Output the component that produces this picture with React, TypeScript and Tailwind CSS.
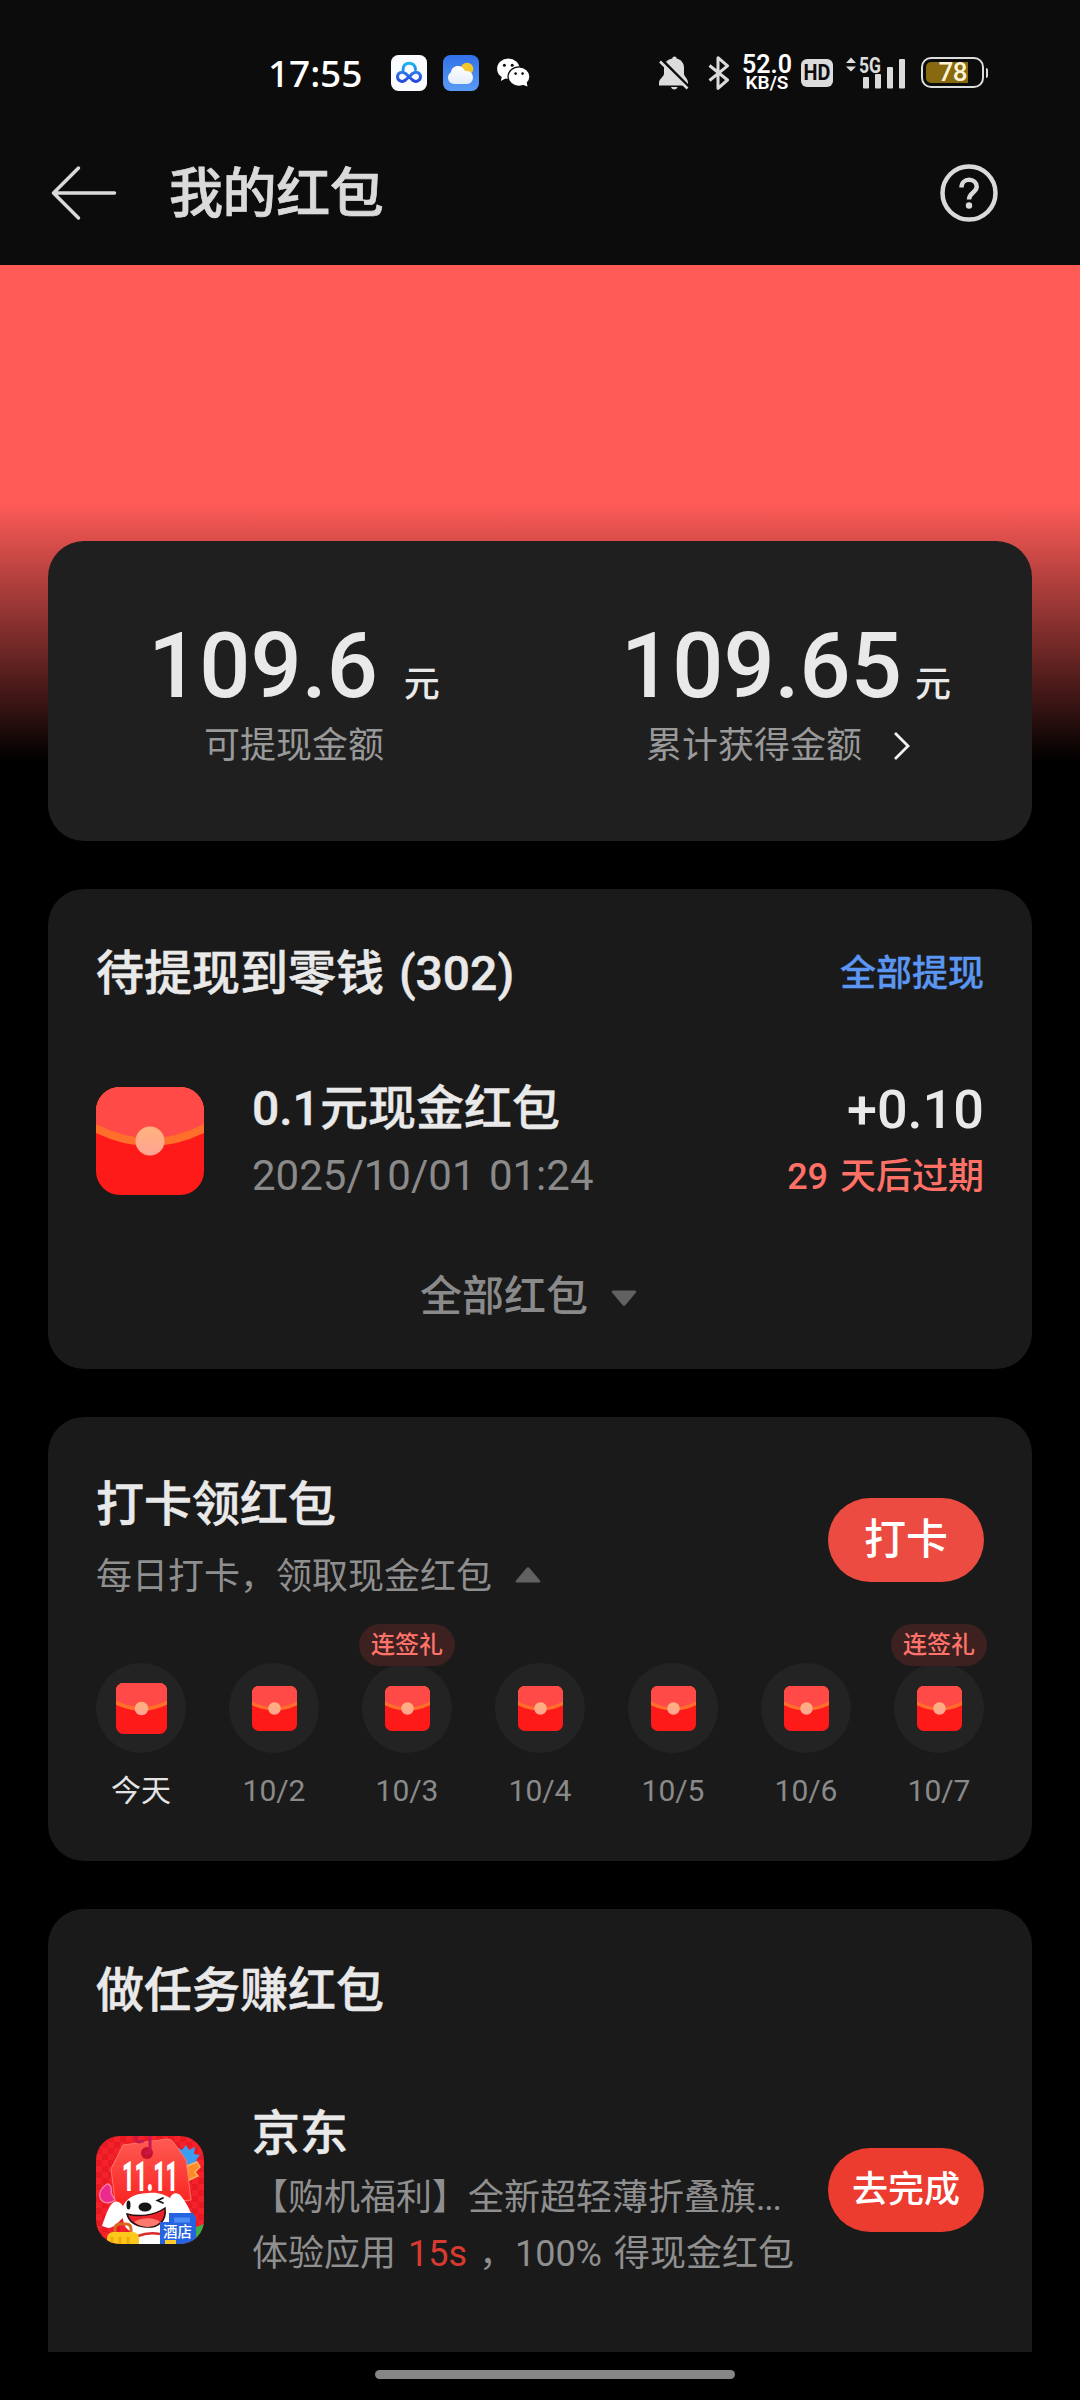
import * as React from 'react';

interface EnvelopeProps {
    className: string;
    radius: number;
    seal: number;
}

interface CheckInDay {
    label: string;
    today?: boolean;
    bonus?: boolean;
}

interface AppProps {};
interface AppState {
    signed: boolean;
};

const days: CheckInDay[] = [
    { label: '今天', today: true },
    { label: '10/2' },
    { label: '10/3', bonus: true },
    { label: '10/4' },
    { label: '10/5' },
    { label: '10/6' },
    { label: '10/7', bonus: true },
];

const Envelope = ({ className, radius, seal }: EnvelopeProps) => {
    const id = 'env' + radius;
    return <svg viewBox="0 0 108 108" className={className}>
        <defs>
            <clipPath id={id}>
                <rect width="108" height="108" rx={radius} />
            </clipPath>
            <linearGradient id={id + 's'} x1="0" y1="0" x2="0" y2="1">
                <stop offset="0" stopColor="#ffb27c" />
                <stop offset="1" stopColor="#ffa494" />
            </linearGradient>
        </defs>
        <g clipPath={'url(#' + id + ')'}>
            <rect width="108" height="108" fill="#ff1a1a" />
            <path d="M0 0H108V46Q54 72 0 46Z" fill="#ff6f2b" />
            <path d="M0 0H108V37Q54 65 0 37Z" fill="#ff4a48" />
        </g>
        <circle cx="54" cy="54" r={seal} fill={'url(#' + id + 's)'} />
    </svg>;
}

const StatusBar = () => (
    <div className="flex h-[120px] items-center pl-[268px] pt-[25px] text-[#dcdcdc]">
        <div className="w-[123px] font-['Noto_Sans'] text-[37px] font-medium leading-[36px] tracking-[-0.1px] text-white">17:55</div>

        <svg viewBox="0 0 36 36" className="h-9 w-9">
            <defs>
                <linearGradient id="pan" x1="0" y1="0" x2="0" y2="1">
                    <stop offset="0" stopColor="#1fb4ee" />
                    <stop offset="0.55" stopColor="#2b74ea" />
                    <stop offset="1" stopColor="#2449d8" />
                </linearGradient>
            </defs>
            <rect width="36" height="36" rx="7.5" fill="#fbfcff" />
            <path d="M12 15C11.500 6 24.500 6 24.500 14.500M18 21.800L14.500 25C11 28 6.500 25.600 6.500 21.800C6.500 17.800 11 15.800 14.400 18.500L21.500 25C25 28 29.500 25.600 29.500 21.800C29.500 17.800 25 15.800 21.600 18.500L19.800 20.200" fill="none" stroke="url(#pan)" strokeWidth="3" strokeLinecap="round" />
        </svg>

        <svg viewBox="0 0 36 36" className="ml-4 h-9 w-9">
            <defs>
                <linearGradient id="sky" x1="0" y1="0" x2="0" y2="1">
                    <stop offset="0" stopColor="#3271e8" />
                    <stop offset="1" stopColor="#5a9bf5" />
                </linearGradient>
                <linearGradient id="cloud" x1="0" y1="0" x2="0" y2="1">
                    <stop offset="0" stopColor="#ffffff" />
                    <stop offset="1" stopColor="#e4ecf8" />
                </linearGradient>
            </defs>
            <rect width="36" height="36" rx="7.500" fill="url(#sky)" />
            <circle cx="24" cy="14" r="6.300" fill="#f5c52e" />
            <path d="M11.500 29C7.800 29 5 26.200 5 22.800C5 20.200 6.200 18.400 8 17.200C8.300 13.500 11.300 11 15 11C18.200 11 20.600 12.800 21.800 15.800C26.500 15.400 30 18.300 30 22.500C30 26.300 27.300 29 23.500 29Z" fill="url(#cloud)" />
        </svg>

        <svg viewBox="0 0 33 29" className="ml-[18px] h-[29px] w-[33px]">
            <path d="M5 18L3.800 23L9 20.300Z" fill="#fff" />
            <ellipse cx="11.300" cy="10.800" rx="11.200" ry="10.200" fill="#fff" />
            <ellipse cx="22" cy="18.600" rx="11" ry="9.800" fill="#fff" stroke="#0c0c0c" strokeWidth="1.300" />
            <path d="M25 26.500L30.500 28.500L29.500 23.500Z" fill="#fff" />
            <circle cx="7.400" cy="7.200" r="1.500" fill="#0c0c0c" />
            <circle cx="15.200" cy="7.200" r="1.500" fill="#0c0c0c" />
            <circle cx="18.600" cy="15.600" r="1.300" fill="#0c0c0c" />
            <circle cx="25.600" cy="15.600" r="1.300" fill="#0c0c0c" />
        </svg>

        <svg viewBox="0 0 30 34" className="ml-[129px] h-[34px] w-[30px]" fill="currentColor">
            <path d="M15.500 0.500C16.800 0.500 17.600 1.400 17.600 2.500C22 3.500 25 7 25 11.500V18C25 20.500 29 22.500 29 27V29.500H0V27C0 22.500 5 21 5 17.500V11C5 6.800 8.500 3.400 13.300 2.500C13.400 1.300 14.200 0.500 15.500 0.500ZM12 31H18.500C18 32.600 17 33.500 15.300 33.500C13.600 33.500 12.500 32.600 12 31Z" />
            <path d="M2.500 3.500L30 31" stroke="#0c0c0c" strokeWidth="3" />
            <path d="M1 5.500L28.500 32.500" stroke="currentColor" strokeWidth="2.600" />
        </svg>

        <svg viewBox="0 0 21 34" className="ml-[19px] h-[34px] w-[21px]" fill="none" stroke="currentColor" strokeWidth="3" strokeLinejoin="round">
            <path d="M1.500 9.500L19.500 24L10 32.300V1.700L19.500 9.800L1.500 24.500" />
        </svg>

        <div className="ml-3 flex w-[52px] flex-col items-center font-['Roboto'] font-semibold text-white">
            <div className="text-[25px] leading-[19px]">52.0</div>
            <div className="text-[19px] leading-[17px]">KB/S</div>
        </div>

        <div className="ml-2 flex h-7 w-8 items-center justify-center rounded-[6px] bg-[#dcdcdc]">
            <span className="scale-x-90 font-['Roboto'] text-[22px] font-bold leading-[28px] text-[#0c0c0c]">HD</span>
        </div>

        <svg viewBox="0 0 60 34" className="ml-3 h-[34px] w-[60px] overflow-visible" fill="currentColor">
            <path d="M1 7L6 1.500L11 7ZM1 10.500H11L6 15.500Z" />
            <text x="14" y="16.500" textLength="22" lengthAdjust="spacingAndGlyphs" fontFamily="Roboto" fontSize="22" fontWeight="700">5G</text>
            <rect x="18" y="21" width="6" height="11.500" rx="1" />
            <rect x="30" y="18" width="6" height="14.500" rx="1" />
            <rect x="42" y="11" width="6" height="21.500" rx="1" />
            <rect x="54" y="3" width="6" height="29.500" rx="1" />
        </svg>

        <div className="ml-4 flex h-[31px] w-[63px] items-center rounded-[10px] border-2 border-[#dcdcdc] p-[3px]">
            <div className="flex h-[21px] w-[42px] items-center justify-end rounded-l-[5px] bg-[#88690f] pr-[1px] font-['Roboto'] text-[26px] font-medium leading-[21px] tracking-[-0.5px] text-[#fdf3d6]">78</div>
        </div>
        <div className="ml-[2px] h-[10px] w-[2px] rounded-r bg-[#dcdcdc]" />
    </div>
);

const TitleBar = () => (
    <div className="flex h-[145px] items-center pl-[50px] pr-[82px]">
        <svg viewBox="0 0 68 56" className="h-14 w-[68px]" fill="none" stroke="#dadada" strokeWidth="3.500" strokeLinecap="round" strokeLinejoin="round">
            <path d="M28.500 3L3.500 28L28.500 53M3.500 28H64.500" />
        </svg>
        <div className="ml-[51px] flex-1 pt-[4px] text-[54px] font-medium leading-[64px] tracking-[-0.4px] text-[#dadada] [-webkit-text-stroke:0.7px]">我的红包</div>
        <svg viewBox="0 0 58 58" className="h-[58px] w-[58px]" fill="none" stroke="#dadada" strokeWidth="4.500">
            <circle cx="29" cy="29" r="26.500" />
            <path d="M21.500 23.500C21.500 18.500 25 15.800 29 15.800C33.300 15.800 36.700 18.700 36.700 22.800C36.700 28.500 29 28.500 29 35.500" />
            <circle cx="29" cy="41.500" r="3.200" fill="#dadada" stroke="none" />
        </svg>
    </div>
);

const JdIcon = () => (
    <svg viewBox="0 0 108 108" className="h-[108px] w-[108px] shrink-0">
        <defs>
            <clipPath id="jd">
                <rect width="108" height="108" rx="24" />
            </clipPath>
            <linearGradient id="tag" x1="0" y1="0" x2="0" y2="1">
                <stop offset="0" stopColor="#ff5a52" />
                <stop offset="1" stopColor="#f9211f" />
            </linearGradient>
            <pattern id="check" width="12" height="12" patternUnits="userSpaceOnUse">
                <rect width="12" height="12" fill="#f5222b" />
                <rect width="6" height="6" fill="#e81b25" />
                <rect x="6" y="6" width="6" height="6" fill="#e81b25" />
            </pattern>
        </defs>
        <g clipPath="url(#jd)">
            <rect width="108" height="108" fill="url(#check)" />
            <path d="M90 9L93 14L99 11L98 18L104 19L100 24L103 29L97 29L94 34L86 30L79 22L80 11L86 14Z" fill="#3d9df2" />
            <path d="M91 30L101 26L104 31L99 36L102 40L91 45L88 40L92 36Z" fill="#ff8a2a" stroke="#ffb35c" strokeWidth="1.500" />
            <path d="M4 62C2 54 8 50 11 48C15 48 16 53 15 57L19 64C14 68 7 68 4 62Z" fill="#ea2a8e" stroke="#ff7a9c" strokeWidth="1.500" />
            <path d="M27 9L71 3Q76 3 78 7L90 24L95 64L20 72L15 33Z" fill="url(#tag)" stroke="#ff7468" strokeWidth="1" />
            <circle cx="51" cy="17" r="6" fill="#c4122e" />
            <path d="M40 0C40 8 43 6 47 5M54 0V15Q54 18 50 17" fill="none" stroke="#c9174f" strokeWidth="3" strokeLinecap="round" />
            <text x="26" y="55" textLength="56" lengthAdjust="spacingAndGlyphs" fill="#fff" fontFamily="Roboto" fontSize="42" fontWeight="900">11.11</text>
            <path d="M6 90C9 82 12 70 18 66C22 64 26 68 27 70C32 60 42 57 53 57C62 56 69 59 74 62C76 56 82 56 85 60C90 66 94 74 97 82L84 98L74 108H40L36 96C30 94 27 88 27 82C22 86 18 92 12 92Z" fill="#fff" />
            <ellipse cx="49" cy="71" rx="6.500" ry="4.500" fill="#151515" />
            <ellipse cx="32.500" cy="69" rx="2" ry="4.500" fill="#151515" />
            <path d="M67 62L61.500 64.500L67 67" fill="none" stroke="#151515" strokeWidth="1.800" strokeLinecap="round" />
            <path d="M31 78C42 81 58 80 69 72C71 86 61 92 50 91C39 90 33 86 31 78Z" fill="#e9252b" stroke="#241010" strokeWidth="1.500" />
            <path d="M38 86C44 82 57 80 64 86C59 92 46 93 38 86Z" fill="#ff7a6c" />
            <path d="M42 100Q52 96 64 98" fill="none" stroke="#d92b2b" strokeWidth="2.500" />
            <path d="M19 98V93Q19 88 24 88H30Q35 88 35 93V98" fill="none" stroke="#d96a1f" strokeWidth="3" />
            <rect x="11" y="96" width="32" height="16" rx="6" fill="#fdc81c" />
            <path d="M16 101V108M24 101V108M32 101V108" stroke="#f2a90c" strokeWidth="3" />
            <path d="M98 92L108 88V108H96Z" fill="#3fae4c" />
            <path d="M64 86H73V77H97L100 82V108H64Z" fill="#2563e0" />
            <path d="M78 84H94" stroke="#4a8df5" strokeWidth="5" />
            <rect x="69" y="104" width="11" height="5" fill="#ffca2b" />
            <text x="67" y="101" fill="#fff" fontFamily="'Noto Sans CJK SC'" fontSize="14.500" fontWeight="500">酒店</text>
        </g>
    </svg>
);

class App extends React.Component<AppProps, AppState> {
    constructor(props: AppProps) {
        super(props);
        this.state = {
            signed: false,
        };
    }

    public handleSign = () => {
        this.setState({signed: true});
    }

    public renderBalance = () => {
        return <div className="flex h-[300px] rounded-[36px] bg-[#1f1f1f] pt-[73px]">
            <div className="flex-1">
                <div className="flex items-baseline justify-center text-[#e9e9e9]">
                    <span className="text-[90px] font-medium leading-[106px]">109.6</span>
                    <span className="ml-[26px] text-[36px] font-medium">元</span>
                </div>
                <div className="mt-[2px] text-center text-[36px] leading-[48px] text-[#999]">可提现金额</div>
            </div>
            <div className="flex-1">
                <div className="flex items-baseline justify-center text-[#e9e9e9]">
                    <span className="text-[90px] font-medium leading-[106px]">109.65</span>
                    <span className="ml-[13px] text-[36px] font-medium">元</span>
                </div>
                <div className="mt-[2px] flex items-center pl-[106px] text-[36px] leading-[48px] text-[#999]">
                    累计获得金额
                    <svg viewBox="0 0 20 30" className="ml-[30px] h-[30px] w-5" fill="none" stroke="#f2f2f2" strokeWidth="2.800">
                        <path d="M3 2L16 15L3 28" />
                    </svg>
                </div>
            </div>
        </div>;
    }

    public renderPending = () => {
        return <div className="h-[480px] rounded-[36px] bg-[#1a1a1a] px-12 pt-[53px]">
            <div className="flex items-center justify-between leading-[64px]">
                <div className="text-[48px] font-medium text-[#e9e9e9] [word-spacing:3px] [-webkit-text-stroke:0.5px]">待提现到零钱 (302)</div>
                <div className="text-[36px] font-medium text-[#5a96f2] [-webkit-text-stroke:0.3px]">全部提现</div>
            </div>
            <div className="mt-[81px] flex h-[108px] items-center">
                <Envelope className="h-[108px] w-[108px]" radius={24} seal={14.5} />
                <div className="ml-12 flex-1 pt-[1px]">
                    <div className="text-[48px] font-medium leading-[68px] text-[#e9e9e9] [-webkit-text-stroke:0.4px]">0.1元现金红包</div>
                    <div className="text-[42px] leading-[66px] text-[#8a8a8a] [word-spacing:3px]">2025/10/01 01:24</div>
                </div>
                <div className="pt-[4px] text-right">
                    <div className="text-[54px] font-medium leading-[68px] text-[#e9e9e9]">+0.10</div>
                    <div className="text-[36px] font-medium leading-[66px] text-[#ff7067] [word-spacing:3px]">29 天后过期</div>
                </div>
            </div>
            <div className="mt-[74px] flex items-center pl-[324px] text-[42px] font-medium leading-[56px] text-[#8a8a8a]">
                全部红包
                <svg viewBox="0 0 26 16" className="ml-[23px] mt-[2px] h-4 w-[26px]" fill="#616161">
                    <path d="M2 0.500H24Q26 1 25 2.500L14.500 15Q13 16.500 11.500 15L1 2.500Q0 1 2 0.500Z" />
                </svg>
            </div>
        </div>;
    }

    public renderDay = (day: CheckInDay) => {
        return <div key={day.label} className="relative flex w-[90px] flex-col items-center">
            <div className="flex h-[90px] w-[90px] items-center justify-center rounded-full bg-[#232323]">
                {day.today
                    ? <Envelope className="h-[51px] w-[51px]" radius={16} seal={14.4} />
                    : <Envelope className="h-[45px] w-[45px]" radius={16.5} seal={15} />}
            </div>
            <div className={(day.today ? 'text-[#e4e4e4]' : 'text-[#8a8a8a]') + ' mt-[19px] text-[30px] leading-[38px]'}>
                {day.label}
            </div>
            {day.bonus && <div className="absolute -left-[3px] -top-[39px] h-[42px] w-24 rounded-full bg-[#3c2120] text-center text-[24px] font-medium leading-[43px] text-[#ff736b]">
                连签礼
            </div>}
        </div>;
    }

    public renderCheckIn = () => {
        return <div className="h-[444px] rounded-[36px] bg-[#1a1a1a] px-12 pt-[56px]">
            <div className="flex items-center justify-between">
                <div>
                    <div className="text-[48px] font-medium leading-[64px] text-[#e9e9e9] [-webkit-text-stroke:0.5px]">打卡领红包</div>
                    <div className="mt-[16px] flex items-center text-[36px] leading-[48px] text-[#8f8f8f]">
                        每日打卡，领取现金红包
                        <svg viewBox="0 0 26 16" className="-mt-[4px] ml-[23px] h-4 w-[26px]" fill="#616161">
                            <path d="M2 15.500H24Q26 15 25 13.500L14.500 1Q13 -0.500 11.500 1L1 13.500Q0 15 2 15.500Z" />
                        </svg>
                    </div>
                </div>
                <button onClick={this.handleSign} className="mt-[6px] h-[84px] w-[156px] rounded-full bg-[#eb4b40] pb-[2px] text-[42px] font-medium text-white">
                    打卡
                </button>
            </div>
            <div className="mt-[62px] flex justify-between">
                {days.map(this.renderDay)}
            </div>
        </div>;
    }

    public renderTasks = () => {
        return <div className="h-[443px] rounded-t-[36px] bg-[#1a1a1a] px-12 pt-[50px]">
            <div className="text-[48px] font-medium leading-[64px] text-[#e9e9e9] [-webkit-text-stroke:0.5px]">做任务赚红包</div>
            <div className="mt-[78px] flex items-start">
                <div className="mt-[35px]">
                    <JdIcon />
                </div>
                <div className="ml-12 flex-1 whitespace-nowrap text-[36px] leading-[56px] text-[#8f8f8f]">
                    <div className="text-[48px] font-medium leading-[66px] text-[#e9e9e9] [-webkit-text-stroke:0.5px]">京东</div>
                    <div className="mt-[3px]">【购机福利】全新超轻薄折叠旗<span className="tracking-[-1.3px]">...</span></div>
                    <div className="[word-spacing:3px]">体验应用 <span className="text-[#d93a30]">15s</span> ，100% 得现金红包</div>
                </div>
                <button className="mt-[47px] h-[84px] w-[156px] shrink-0 rounded-full bg-[#ec3b2f] text-[36px] font-medium text-white">
                    去完成
                </button>
            </div>
        </div>;
    }

    public render() {
        return <div className="h-[2400px] w-[1080px] overflow-hidden bg-black font-['Roboto','Noto_Sans_CJK_SC',sans-serif]">
            <div className="h-[265px] bg-[#0c0c0c]">
                <StatusBar />
                <TitleBar />
            </div>
            <div className="h-[2087px] bg-[linear-gradient(to_bottom,#ff5b57_0px,#ff5b57_238px,#000_496px)] px-12 pt-[276px]">
                <div className="flex flex-col gap-12">
                    {this.renderBalance()}
                    {this.renderPending()}
                    {this.renderCheckIn()}
                    {this.renderTasks()}
                </div>
            </div>
            <div className="flex h-12 justify-center bg-black pl-[30px] pt-[18px]">
                <div className="h-[9px] w-[360px] rounded-full bg-[#868686]" />
            </div>
        </div>
    }
}


export default App;
